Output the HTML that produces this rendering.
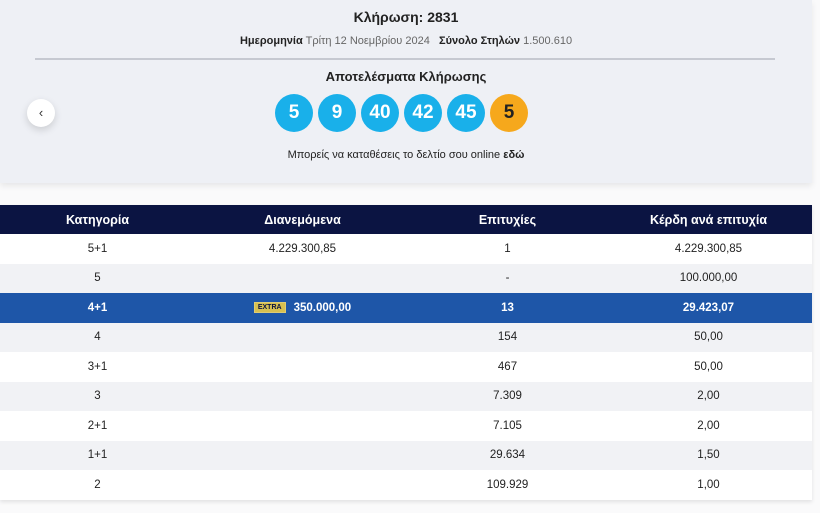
<!DOCTYPE html>
<html><head><meta charset="utf-8"><style>
*{margin:0;padding:0;box-sizing:border-box}
body{width:820px;height:513px;background:#fafafb;font-family:"Liberation Sans Narrow","Liberation Sans",sans-serif;color:#222;position:relative;overflow:hidden}
.card{position:absolute;left:0;top:0;width:812px;height:183px;background:#eef0f5;box-shadow:0 3px 6px rgba(0,0,0,.08)}
.t{position:absolute;width:100%;text-align:center}
.ball{position:absolute;top:94px;width:38px;height:38px;border-radius:50%;background:#19b0ea;color:#fff;font-weight:bold;font-size:19px;line-height:38px;text-align:center}
.back{position:absolute;left:27px;top:99px;width:28px;height:28px;border-radius:50%;background:#fff;box-shadow:0 3px 8px rgba(0,0,0,.15);font-size:13px;text-align:center;line-height:28px;color:#333}
table{position:absolute;left:0;top:205px;width:812px;border-collapse:collapse;font-size:11.5px;box-shadow:0 2px 4px rgba(0,0,0,.1)}
td,th{text-align:center;height:29.5px;padding:0}
th{background:#0b1442;color:#fff;font-size:12.5px;height:29px}
tr.g td{background:#f1f2f5}
tr.w td{background:#fff}
tr.b td{background:#1e56a8;color:#fff;font-weight:bold}
.ex{display:inline-block;background:#d8c050;color:#0b1442;font-size:7px;padding:1px 3px;border:1px solid #fff3;margin-right:8px;vertical-align:middle;font-weight:bold}
</style></head><body>
<div class="card">
<div class="t" style="top:9px;font-size:14px;font-weight:bold">Κλήρωση: 2831</div>
<div class="t" style="top:35px;font-size:11px"><b>Ημερομηνία</b> <span style="color:#666">Τρίτη 12 Νοεμβρίου 2024</span> &nbsp; <b>Σύνολο Στηλών</b> <span style="color:#666">1.500.610</span></div>
<div style="position:absolute;left:35px;top:58px;width:740px;height:2px;background:#c6c9d1"></div>
<div class="t" style="top:69px;font-size:13px;font-weight:bold">Αποτελέσματα Κλήρωσης</div>
<div class="back">‹</div>
<div class="ball" style="left:275px">5</div>
<div class="ball" style="left:318px">9</div>
<div class="ball" style="left:361px">40</div>
<div class="ball" style="left:404px">42</div>
<div class="ball" style="left:447px">45</div>
<div class="ball" style="left:490px;background:#f6a81c;color:#222">5</div>
<div class="t" style="top:149px;font-size:11px">Μπορείς να καταθέσεις το δελτίο σου online <b>εδώ</b></div>
</div>
<table>
<tr><th style="width:195px">Κατηγορία</th><th style="width:215px">Διανεμόμενα</th><th style="width:195px">Επιτυχίες</th><th>Κέρδη ανά επιτυχία</th></tr>
<tr class="w"><td>5+1</td><td>4.229.300,85</td><td>1</td><td>4.229.300,85</td></tr>
<tr class="g"><td>5</td><td></td><td>-</td><td>100.000,00</td></tr>
<tr class="b"><td>4+1</td><td><span class="ex">EXTRA</span>350.000,00</td><td>13</td><td>29.423,07</td></tr>
<tr class="g"><td>4</td><td></td><td>154</td><td>50,00</td></tr>
<tr class="w"><td>3+1</td><td></td><td>467</td><td>50,00</td></tr>
<tr class="g"><td>3</td><td></td><td>7.309</td><td>2,00</td></tr>
<tr class="w"><td>2+1</td><td></td><td>7.105</td><td>2,00</td></tr>
<tr class="g"><td>1+1</td><td></td><td>29.634</td><td>1,50</td></tr>
<tr class="w"><td>2</td><td></td><td>109.929</td><td>1,00</td></tr>
</table>
</body></html>
